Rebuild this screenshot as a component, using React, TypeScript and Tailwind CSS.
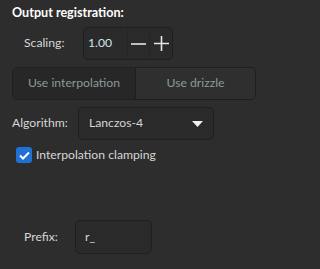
import { useState } from 'react';

const font = { fontFamily: 'Lato, "Noto Sans", sans-serif' };

export default function App() {
    const [mode, setMode] = useState<'interp' | 'drizzle'>('interp');
    const [clamp, setClamp] = useState(true);

    return (
        <div className="w-[320px] h-[269px] bg-[#2d2d2d] text-[#d6d6d6] pl-3 pt-[3px] text-[12.2px] overflow-hidden" style={font}>
            <div className="h-[20px] leading-[20px] font-bold text-[12.6px] text-white mb-[4px]">Output registration:</div>

            {/* scaling */}
            <div className="flex items-center h-[33px] pl-3">
                <span className="w-[59px]">Scaling:</span>
                <div className="flex w-[90px] h-[33px] rounded-[5px] border border-[#1f1f1f] bg-[#2a2a2a]">
                    <span className="flex-1 flex items-center pl-[4px] text-[#cfe3ea]">1.00</span>
                    <button className="w-[22px] flex items-center justify-center border-l border-[#262626]">
                        <svg width="15" height="14" viewBox="0 0 15 14"><path d="M0 7h15" stroke="#e6e6e6" strokeWidth="1.6" /></svg>
                    </button>
                    <button className="w-[23px] flex items-center justify-center border-l border-[#262626]">
                        <svg width="15" height="15" viewBox="0 0 15 15"><path d="M0 7.5h15M7.5 0v15" stroke="#e6e6e6" strokeWidth="1.6" /></svg>
                    </button>
                </div>
            </div>

            {/* mode toggle */}
            <div className="flex w-[244px] h-[33px] mt-[7px] rounded-[5px] border border-[#1f1f1f] overflow-hidden text-[#8a9b9b]">
                <button onClick={() => setMode('interp')} className={`w-[123px] border-r border-[#1f1f1f] ${mode === 'interp' ? 'bg-[#272727]' : 'bg-[#2f2f2f]'}`}>Use interpolation</button>
                <button onClick={() => setMode('drizzle')} className={`flex-1 ${mode === 'drizzle' ? 'bg-[#272727]' : 'bg-[#2f2f2f]'}`}>Use drizzle</button>
            </div>

            {/* algorithm */}
            <div className="flex items-center h-[33px] mt-[7px]">
                <span className="w-[66px]">Algorithm:</span>
                <div className="flex items-center justify-between w-[136px] h-[33px] rounded-[5px] border border-[#1f1f1f] bg-[#2a2a2a] pl-[10px] pr-[10px]">
                    <span>Lanczos-4</span>
                    <svg width="11" height="6" viewBox="0 0 11 6"><path d="M0 0h11L5.5 6z" fill="#f0f0f0" /></svg>
                </div>
            </div>

            {/* clamping */}
            <label className="flex items-center h-[16px] mt-[7px] pl-[4px] gap-[4px]" onClick={() => setClamp(!clamp)}>
                <span className={`w-[16px] h-[16px] rounded-[3px] flex items-center justify-center ${clamp ? 'bg-[#2071d6]' : 'border border-[#777]'}`}>
                    {clamp && (
                        <svg width="11" height="9" viewBox="0 0 11 9"><path d="M1 4.5l3 3L10 1.5" stroke="#fff" strokeWidth="2" fill="none" /></svg>
                    )}
                </span>
                <span>Interpolation clamping</span>
            </label>

            {/* prefix */}
            <div className="flex items-center h-[34px] mt-[57px] pl-3">
                <span className="w-[51px]">Prefix:</span>
                <div className="flex items-center w-[77px] h-[34px] rounded-[5px] border border-[#1f1f1f] bg-[#2a2a2a] pl-[9px]">r_</div>
            </div>
        </div>
    );
}
